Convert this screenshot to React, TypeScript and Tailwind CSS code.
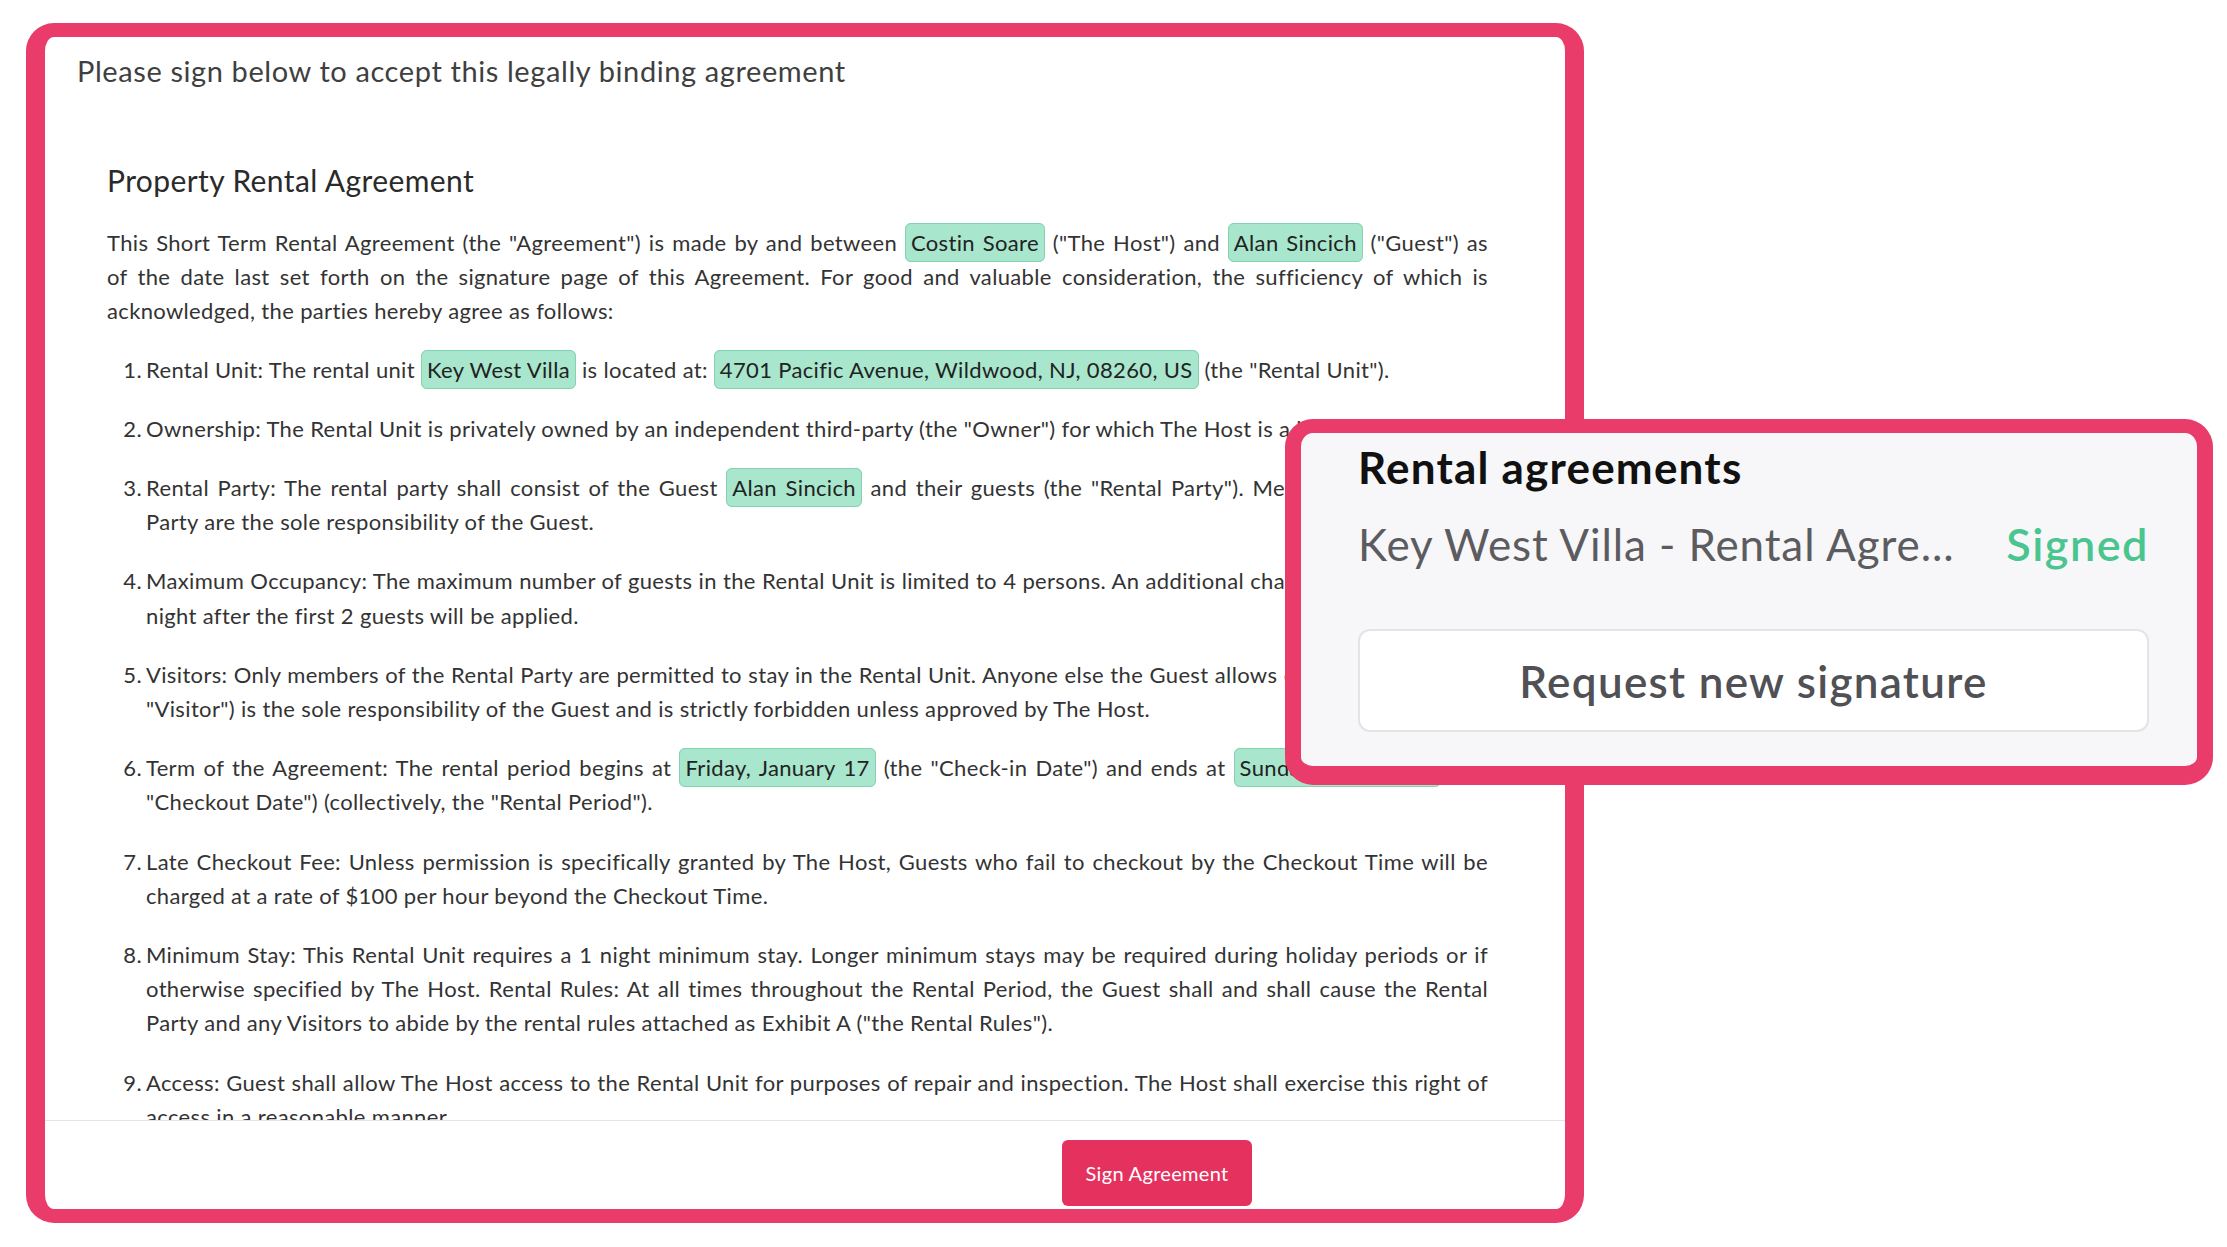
import React from "react";

const Chip = ({ children }: { children: React.ReactNode }) => (
  <span className="rounded-[6px] border border-[#84d2b0] bg-[#a8e6cd] px-[5px] py-[5px] text-[#222] [box-decoration-break:clone]">
    {children}
  </span>
);

type LineProps = { children: React.ReactNode; kind?: "j" | "n" };

const Line = ({ children, kind = "n" }: LineProps) => {
  if (kind === "j")
    return (
      <div className="h-[34.2px] overflow-clip [overflow-clip-margin:5px] text-justify [text-align-last:justify]">
        {children}
      </div>
    );
  return <div className="whitespace-nowrap">{children}</div>;
};

const Item = ({ n, children, first }: { n: number; children: React.ReactNode; first?: boolean }) => (
  <div className={first ? "mt-[24px] flex" : "mt-[25px] flex"}>
    <span className="w-[39px] shrink-0 pr-[4px] text-right">{n}.</span>
    <div className="min-w-0 flex-1">{children}</div>
  </div>
);

export default function App() {
  return (
    <div
      className="relative h-[1247px] w-[2227px] overflow-hidden bg-white pl-[26px] pt-[23px]"
      style={{ fontFamily: "Lato, 'Noto Sans', sans-serif" }}
    >
      {/* Left frame: agreement modal */}
      <div className="flex h-[1200px] w-[1558px] flex-col rounded-[28px] border-x-[19px] border-y-[14px] border-[#e93c6a] bg-white">
        <div className="h-[70px] shrink-0 pl-[32px] pt-[14px] text-[29px] leading-[40px] tracking-[0.6px] text-[#3f3f3f]">
          Please sign below to accept this legally binding agreement
        </div>
        <div className="h-[1013px] shrink-0 overflow-hidden pl-[62px] pr-[77px] text-[22px] leading-[34.2px] tracking-[0.35px] text-[#333]">
          <div className="mt-[53px] text-[30px] leading-[40px] tracking-[0.4px] text-[#2a2a2a]">
            Property Rental Agreement
          </div>
          <div className="mt-[26px]">
            <Line kind="j">
              This Short Term Rental Agreement (the "Agreement") is made by and between <Chip>Costin Soare</Chip> ("The
              Host") and <Chip>Alan Sincich</Chip> ("Guest") as
            </Line>
            <Line kind="j">
              of the date last set forth on the signature page of this Agreement. For good and valuable consideration,
              the sufficiency of which is
            </Line>
            <Line>acknowledged, the parties hereby agree as follows:</Line>
          </div>
          <Item n={1} first>
            <Line>
              Rental Unit: The rental unit <Chip>Key West Villa</Chip> is located at:{" "}
              <Chip>4701 Pacific Avenue, Wildwood, NJ, 08260, US</Chip> (the "Rental Unit").
            </Line>
          </Item>
          <Item n={2}>
            <Line>
              Ownership: The Rental Unit is privately owned by an independent third-party (the "Owner") for which The
              Host is a licensed agent.
            </Line>
          </Item>
          <Item n={3}>
            <Line kind="j">
              Rental Party: The rental party shall consist of the Guest <Chip>Alan Sincich</Chip> and their guests (the
              "Rental Party"). Members of the Rental
            </Line>
            <Line>Party are the sole responsibility of the Guest.</Line>
          </Item>
          <Item n={4}>
            <Line kind="j">
              Maximum Occupancy: The maximum number of guests in the Rental Unit is limited to 4 persons. An additional
              charge of $25 per guest per
            </Line>
            <Line>night after the first 2 guests will be applied.</Line>
          </Item>
          <Item n={5}>
            <Line kind="j">
              Visitors: Only members of the Rental Party are permitted to stay in the Rental Unit. Anyone else the Guest
              allows on the premises (the
            </Line>
            <Line>"Visitor") is the sole responsibility of the Guest and is strictly forbidden unless approved by The Host.</Line>
          </Item>
          <Item n={6}>
            <Line kind="j">
              Term of the Agreement: The rental period begins at <Chip>Friday, January 17</Chip> (the "Check-in Date")
              and ends at <Chip>Sunday, January 19</Chip> (the
            </Line>
            <Line>"Checkout Date") (collectively, the "Rental Period").</Line>
          </Item>
          <Item n={7}>
            <Line kind="j">
              Late Checkout Fee: Unless permission is specifically granted by The Host, Guests who fail to checkout by
              the Checkout Time will be
            </Line>
            <Line>charged at a rate of $100 per hour beyond the Checkout Time.</Line>
          </Item>
          <Item n={8}>
            <Line kind="j">
              Minimum Stay: This Rental Unit requires a 1 night minimum stay. Longer minimum stays may be required
              during holiday periods or if
            </Line>
            <Line kind="j">
              otherwise specified by The Host. Rental Rules: At all times throughout the Rental Period, the Guest shall
              and shall cause the Rental
            </Line>
            <Line>Party and any Visitors to abide by the rental rules attached as Exhibit A ("the Rental Rules").</Line>
          </Item>
          <Item n={9}>
            <Line kind="j">
              Access: Guest shall allow The Host access to the Rental Unit for purposes of repair and inspection. The
              Host shall exercise this right of
            </Line>
            <Line>access in a reasonable manner.</Line>
          </Item>
        </div>
        <div className="flex-1 border-t border-[#e4e4e4]">
          <button className="ml-[1017px] mt-[19px] flex h-[66px] w-[190px] items-center justify-center rounded-[6px] bg-[#e5315e] text-[20px] tracking-[0.3px] text-white">
            Sign Agreement
          </button>
        </div>
      </div>

      {/* Right popup: rental agreements */}
      <div className="absolute left-[1285px] top-[419px] h-[366px] w-[928px] rounded-[28px] border-x-[16px] border-b-[19px] border-t-[14px] border-[#e93c6a] bg-[#f7f7f9] pl-[57px] pr-[48px] pt-[9px]">
        <div className="text-[44px] font-bold leading-[50px] tracking-[1.2px] text-[#111]">Rental agreements</div>
        <div className="mt-[26px] flex items-baseline justify-between text-[44px] leading-[53px]">
          <span className="tracking-[0.9px] text-[#5c5c60]">Key West Villa - Rental Agre...</span>
          <span className="text-[45px] font-semibold tracking-[1.5px] text-[#4bc58f]">Signed</span>
        </div>
        <div className="mt-[58px] flex h-[103px] items-center justify-center rounded-[12px] border-2 border-[#e4e4e7] bg-white text-[44px] font-semibold tracking-[1.3px] text-[#505055]">
          Request new signature
        </div>
      </div>
    </div>
  );
}
